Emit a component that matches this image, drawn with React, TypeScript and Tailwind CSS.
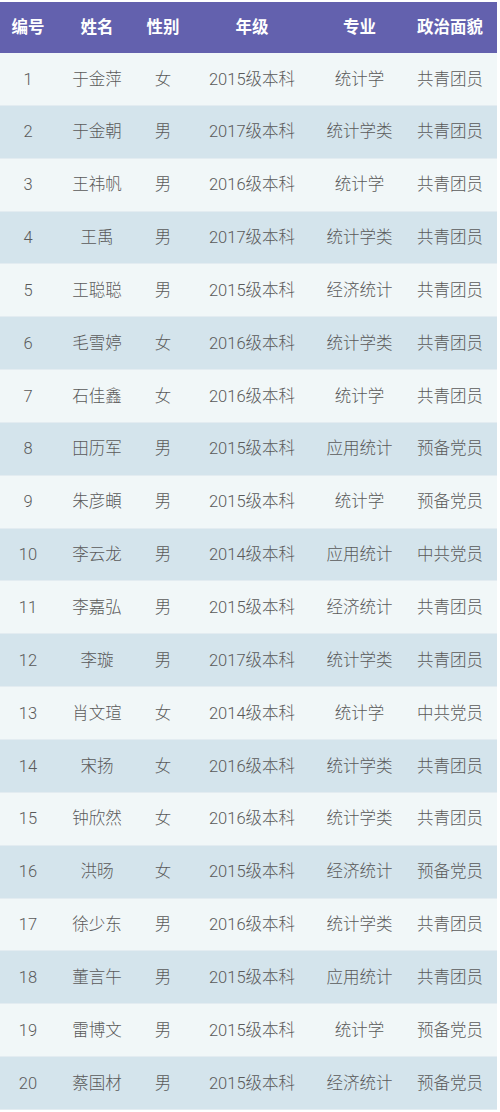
const HEADERS = ['编号', '姓名', '性别', '年级', '专业', '政治面貌']

const ROWS: [string, string, string, string, string][] = [
  ['于金萍', '女', '2015级本科', '统计学', '共青团员'],
  ['于金朝', '男', '2017级本科', '统计学类', '共青团员'],
  ['王祎帆', '男', '2016级本科', '统计学', '共青团员'],
  ['王禹', '男', '2017级本科', '统计学类', '共青团员'],
  ['王聪聪', '男', '2015级本科', '经济统计', '共青团员'],
  ['毛雪婷', '女', '2016级本科', '统计学类', '共青团员'],
  ['石佳鑫', '女', '2016级本科', '统计学', '共青团员'],
  ['田历军', '男', '2015级本科', '应用统计', '预备党员'],
  ['朱彦頔', '男', '2015级本科', '统计学', '预备党员'],
  ['李云龙', '男', '2014级本科', '应用统计', '中共党员'],
  ['李嘉弘', '男', '2015级本科', '经济统计', '共青团员'],
  ['李璇', '男', '2017级本科', '统计学类', '共青团员'],
  ['肖文瑄', '女', '2014级本科', '统计学', '中共党员'],
  ['宋扬', '女', '2016级本科', '统计学类', '共青团员'],
  ['钟欣然', '女', '2016级本科', '统计学类', '共青团员'],
  ['洪旸', '女', '2015级本科', '经济统计', '预备党员'],
  ['徐少东', '男', '2016级本科', '统计学类', '共青团员'],
  ['董言午', '男', '2015级本科', '应用统计', '共青团员'],
  ['雷博文', '男', '2015级本科', '统计学', '预备党员'],
  ['蔡国材', '男', '2015级本科', '经济统计', '预备党员'],
]

const COLS = 'grid grid-cols-[56px_82px_50px_128px_87px_94px]'

export default function App() {
  return (
    <div className="h-[1112px] w-[500px] overflow-hidden bg-white pt-[2px]">
      <div className="w-[497px]">
        <div
          className={`${COLS} h-[51px] items-center bg-[#6361ae] font-['Liberation_Sans','Noto_Sans_CJK_SC',sans-serif] text-[16.5px] font-bold text-white`}
        >
          {HEADERS.map((h) => (
            <div key={h} className="text-center">
              {h}
            </div>
          ))}
        </div>
        {ROWS.map((r, i) => (
          <div
            key={i}
            className={`${COLS} h-[52.85px] items-center border-b border-[#e3ecf1] pt-[2px] font-['Roboto','Noto_Sans_CJK_SC',sans-serif] text-[16.5px] font-light text-[#5a5a5a] ${
              i % 2 === 0 ? 'bg-[#f1f7f8]' : 'bg-[#d4e4ec]'
            }`}
          >
            <div className="text-center">{i + 1}</div>
            {r.map((c, j) => (
              <div key={j} className="text-center">
                {c}
              </div>
            ))}
          </div>
        ))}
      </div>
    </div>
  )
}
